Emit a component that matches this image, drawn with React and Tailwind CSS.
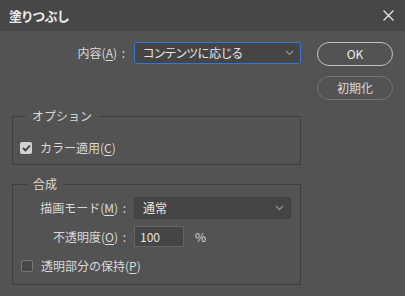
import React from 'react';

function Chevron() {
  return (
    <svg width="9" height="6" viewBox="0 0 9 6" className="text-[#9a9a9a]">
      <polyline points="1,1 4.5,4.5 8,1" fill="none" stroke="currentColor" strokeWidth="1.1" />
    </svg>
  );
}

function Mn({ children }) {
  return <span className="underline underline-offset-2">{children}</span>;
}

function Label({ width, children }) {
  return (
    <>
      <span className={`${width} text-right whitespace-nowrap`}>{children}</span>
      <span className="w-[13px] text-center">:</span>
    </>
  );
}

function Select({ value, width, focused }) {
  return (
    <div
      className={`${width} h-[22px] flex items-center justify-between pl-[8px] pr-[6px] rounded-[3px] bg-[#454545] border ${
        focused ? 'border-[#3576d8]' : 'border-[#3d3d3d]'
      }`}
    >
      <span className="text-[#e6e6e6] [font-feature-settings:'palt']">{value}</span>
      <Chevron />
    </div>
  );
}

function Checkbox({ checked }) {
  return checked ? (
    <span className="w-[12px] h-[12px] rounded-[2px] bg-[#d2d2d2] flex items-center justify-center">
      <svg width="9" height="8" viewBox="0 0 9 8">
        <polyline points="1,4 3.5,6.5 8,1.5" fill="none" stroke="#3a3a3a" strokeWidth="1.8" />
      </svg>
    </span>
  ) : (
    <span className="w-[12px] h-[12px] rounded-[2px] bg-[#474747] border border-[#767676]" />
  );
}

export default function App() {
  return (
    <div className="w-[405px] h-[296px] overflow-hidden flex flex-col bg-[#535353] text-[12px] leading-[16px] text-[#dadada] font-['Noto_Sans_CJK_JP','Noto_Sans',sans-serif]">
      <div className="h-[31px] shrink-0 bg-[#474747] flex items-center justify-between pl-[9px] pr-[11px]">
        <span className="text-[13px] font-bold text-[#ececec] [font-feature-settings:'palt']">塗りつぶし</span>
        <svg width="11" height="11" viewBox="0 0 11 11">
          <path d="M0.5 0.5 L10.5 10.5 M10.5 0.5 L0.5 10.5" stroke="#e8e8e8" strokeWidth="1.2" />
        </svg>
      </div>

      <div className="flex pt-[11px] pl-[12px]">
        <div className="w-[289px] flex flex-col">
          <div className="flex items-center h-[22px]">
            <Label width="w-[105px]">
              内容(<Mn>A</Mn>)
            </Label>
            <div className="ml-[4px]">
              <Select value="コンテンツに応じる" width="w-[167px]" focused />
            </div>
          </div>

          <fieldset className="mt-[44px] border border-[#3f3f3f] pb-[8px]">
            <legend className="ml-[13px] px-[6px] leading-[16px]">オプション</legend>
            <div className="mt-[16px] h-[16px] pl-[7px] flex items-center gap-[8px]">
              <Checkbox checked />
              <span>
                カラー適用(<Mn>C</Mn>)
              </span>
            </div>
          </fieldset>

          <fieldset className="mt-[11px] border border-[#3f3f3f] pb-[10px]">
            <legend className="ml-[14px] px-[6px] leading-[16px]">合成</legend>
            <div className="mt-[5px] flex items-center h-[22px]">
              <Label width="w-[105px]">
                描画モード(<Mn>M</Mn>)
              </Label>
              <div className="ml-[3px]">
                <Select value="通常" width="w-[157px]" />
              </div>
            </div>
            <div className="mt-[7px] flex items-center h-[21px]">
              <Label width="w-[105px]">
                不透明度(<Mn>O</Mn>)
              </Label>
              <div className="ml-[3px] w-[50px] h-[21px] flex items-center pl-[5px] bg-[#454545] border border-[#646464] text-[#e6e6e6]">
                100
              </div>
              <span className="ml-[11px]">%</span>
            </div>
            <div className="mt-[11px] h-[16px] pl-[8px] flex items-center gap-[8px]">
              <Checkbox />
              <span>
                透明部分の保持(<Mn>P</Mn>)
              </span>
            </div>
          </fieldset>
        </div>

        <div className="ml-[16px] flex flex-col gap-[10px]">
          <button className="w-[76px] h-[24px] rounded-full border border-[#c4c4c4] text-[#ececec] flex items-center justify-center">
            OK
          </button>
          <button className="w-[76px] h-[24px] rounded-full border border-[#757575] text-[#dadada] flex items-center justify-center">
            初期化
          </button>
        </div>
      </div>
    </div>
  );
}
